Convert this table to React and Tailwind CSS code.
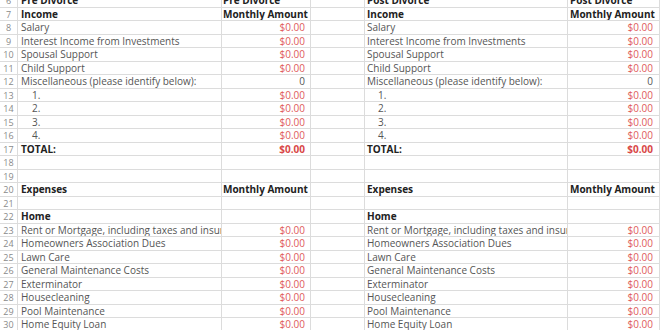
import React from "react";

const rows = [
  { n: 6, a: "Pre Divorce", b: "Pre Divorce", bold: true, head: true },
  { n: 7, a: "Income", b: "Monthly Amount", bold: true, head: true },
  { n: 8, a: "Salary", b: "$0.00" },
  { n: 9, a: "Interest Income from Investments", b: "$0.00" },
  { n: 10, a: "Spousal Support", b: "$0.00" },
  { n: 11, a: "Child Support", b: "$0.00" },
  { n: 12, a: "Miscellaneous (please identify below):", b: "0", plain: true },
  { n: 13, a: "1.", b: "$0.00", indent: true },
  { n: 14, a: "2.", b: "$0.00", indent: true },
  { n: 15, a: "3.", b: "$0.00", indent: true },
  { n: 16, a: "4.", b: "$0.00", indent: true },
  { n: 17, a: "TOTAL:", b: "$0.00", bold: true },
  { n: 18 },
  { n: 19 },
  { n: 20, a: "Expenses", b: "Monthly Amount", bold: true, head: true },
  { n: 21 },
  { n: 22, a: "Home", bold: true },
  { n: 23, a: "Rent or Mortgage, including taxes and insurance", b: "$0.00" },
  { n: 24, a: "Homeowners Association Dues", b: "$0.00" },
  { n: 25, a: "Lawn Care", b: "$0.00" },
  { n: 26, a: "General Maintenance Costs", b: "$0.00" },
  { n: 27, a: "Exterminator", b: "$0.00" },
  { n: 28, a: "Housecleaning", b: "$0.00" },
  { n: 29, a: "Pool Maintenance", b: "$0.00" },
  { n: 30, a: "Home Equity Loan", b: "$0.00" },
];

const cell =
  "h-[13.5px] border-b border-r border-[#dcdcdc] overflow-hidden whitespace-nowrap leading-[13px]";

function Amount({ r }) {
  if (!r.b) return null;
  if (r.head) {
    return <span className="font-bold text-[#222]">{r.b}</span>;
  }
  if (r.plain) {
    return <span className="text-[#555]">{r.b}</span>;
  }
  return (
    <span className={r.bold ? "font-bold text-[#d94848]" : "text-[#e05a5a]"}>
      {r.b}
    </span>
  );
}

export default function App() {
  return (
    <div
      className="w-[660px] h-[330px] overflow-hidden bg-white text-[10px]"
      style={{ fontFamily: "'Open Sans', 'Liberation Sans', sans-serif" }}
    >
      <div className="-mt-[6px] grid grid-cols-[18px_204px_89px_54px_203px_92px]">
        {rows.map((r) => {
          const labelCls = r.bold ? "font-bold text-[#222]" : "text-[#555]";
          const postText = r.n === 6 ? "Post Divorce" : r.a;
          const postB = r.n === 6 ? "Post Divorce" : r.b;
          return (
            <React.Fragment key={r.n}>
              <div className={`${cell} text-center text-[9px] text-[#8a8a8a]`}>
                {r.n}
              </div>
              <div className={`${cell} ${labelCls} ${r.indent ? "pl-[14px]" : "pl-[3px]"}`}>
                {r.a}
              </div>
              <div className={`${cell} ${r.head ? "pl-[1px] text-left" : "pr-[5px] text-right"}`}>
                <Amount r={r} />
              </div>
              <div className={cell} />
              <div className={`${cell} ${labelCls} ${r.indent ? "pl-[13px]" : "pl-[2px]"}`}>
                {postText}
              </div>
              <div className={`${cell} ${r.head ? "pl-[2px] text-left" : "pr-[6px] text-right"}`}>
                <Amount r={{ ...r, b: postB }} />
              </div>
            </React.Fragment>
          );
        })}
      </div>
    </div>
  );
}
